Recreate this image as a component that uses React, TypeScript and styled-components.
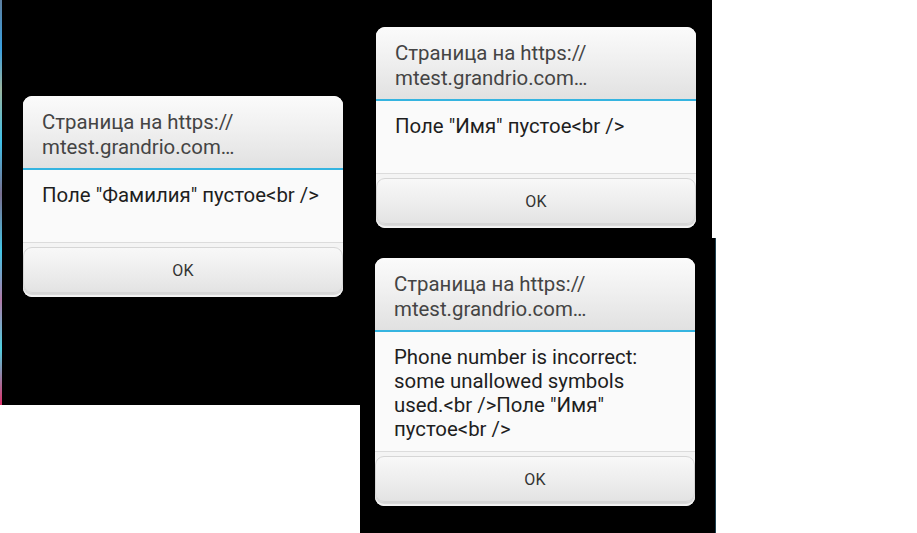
import styled, { createGlobalStyle } from "styled-components";

const GlobalStyle = createGlobalStyle`
  html, body {
    margin: 0;
    padding: 0;
    background: #ffffff;
  }
  body {
    font-family: Roboto, "Noto Sans", "Liberation Sans", sans-serif;
  }
`;

const Page = styled.div`
  width: 917px;
  height: 533px;
  display: flex;
  align-items: flex-start;
  background: #ffffff;
  overflow: hidden;
`;

const Column = styled.div`
  display: flex;
  flex-direction: column;
  align-items: flex-start;
`;

const Panel = styled.div<{ $w: number; $h: number; $edge?: boolean }>`
  width: ${(p) => p.$w}px;
  height: ${(p) => p.$h}px;
  background: #000000;
  display: flex;
  box-sizing: border-box;
  ${(p) => (p.$edge ? "border-right: 1px solid #1f4150;" : "")}
`;

const Strip = styled.div`
  width: 2px;
  align-self: stretch;
  background: linear-gradient(
    180deg,
    #5d7fa0 0%,
    #3aa0e0 12%,
    #9bb5a0 22%,
    #3fc0e8 35%,
    #7a6f90 48%,
    #42c6e6 62%,
    #b07aa8 74%,
    #4fd0e0 86%,
    #e0306a 100%
  );
`;

const Slot = styled.div<{ $top: number; $left: number }>`
  padding-top: ${(p) => p.$top}px;
  padding-left: ${(p) => p.$left}px;
`;

const Dialog = styled.div`
  width: 320px;
  border-radius: 9px;
  overflow: hidden;
  background: #f2f2f2;
  display: flex;
  flex-direction: column;
`;

const Title = styled.div`
  height: 74px;
  box-sizing: border-box;
  padding: 14px 16px 0 19px;
  background: linear-gradient(180deg, #fbfbfb 0%, #f0f0f0 45%, #e1e1e1 100%);
  color: #444444;
  font-size: 20.4px;
  line-height: 24.5px;
  border-bottom: 2px solid #35b4e0;
`;

const Message = styled.div`
  min-height: 73px;
  box-sizing: border-box;
  padding: 13px 20px 10px 19px;
  background: #fafafa;
  color: #1e1e1e;
  font-size: 20.4px;
  line-height: 24px;
  border-bottom: 1px solid #dcdcdc;
`;

const Actions = styled.div`
  padding: 4px 0 4px;
  background: #f4f4f4;
`;

const OkButton = styled.button`
  width: 100%;
  height: 46px;
  border: 1px solid #d6d6d6;
  border-radius: 9px;
  background: linear-gradient(180deg, #f8f8f8 0%, #ececec 60%, #e3e3e3 100%);
  box-shadow: 0 2px 1px rgba(0, 0, 0, 0.12);
  font-family: Roboto, "Liberation Sans", sans-serif;
  font-size: 16px;
  color: #333333;
  letter-spacing: 0.3px;
  cursor: pointer;
`;

interface IAlert {
  top: number;
  left: number;
  text: string;
}

function Alert({ top, left, text }: IAlert) {
  return (
    <Slot $top={top} $left={left}>
      <Dialog>
        <Title>
          Страница на https://
          <br />
          mtest.grandrio.com…
        </Title>
        <Message>{text}</Message>
        <Actions>
          <OkButton>OK</OkButton>
        </Actions>
      </Dialog>
    </Slot>
  );
}

export default function App() {
  return (
    <Page>
      <GlobalStyle />
      <Panel $w={360} $h={405}>
        <Strip />
        <Alert top={96} left={21} text={'Поле "Фамилия" пустое<br />'} />
      </Panel>
      <Column>
        <Panel $w={352} $h={238}>
          <Alert top={27} left={16} text={'Поле "Имя" пустое<br />'} />
        </Panel>
        <Panel $w={356} $h={295} $edge>
          <Alert
            top={20}
            left={15}
            text={
              'Phone number is incorrect: some unallowed symbols used.<br />Поле "Имя" пустое<br />'
            }
          />
        </Panel>
      </Column>
    </Page>
  );
}
